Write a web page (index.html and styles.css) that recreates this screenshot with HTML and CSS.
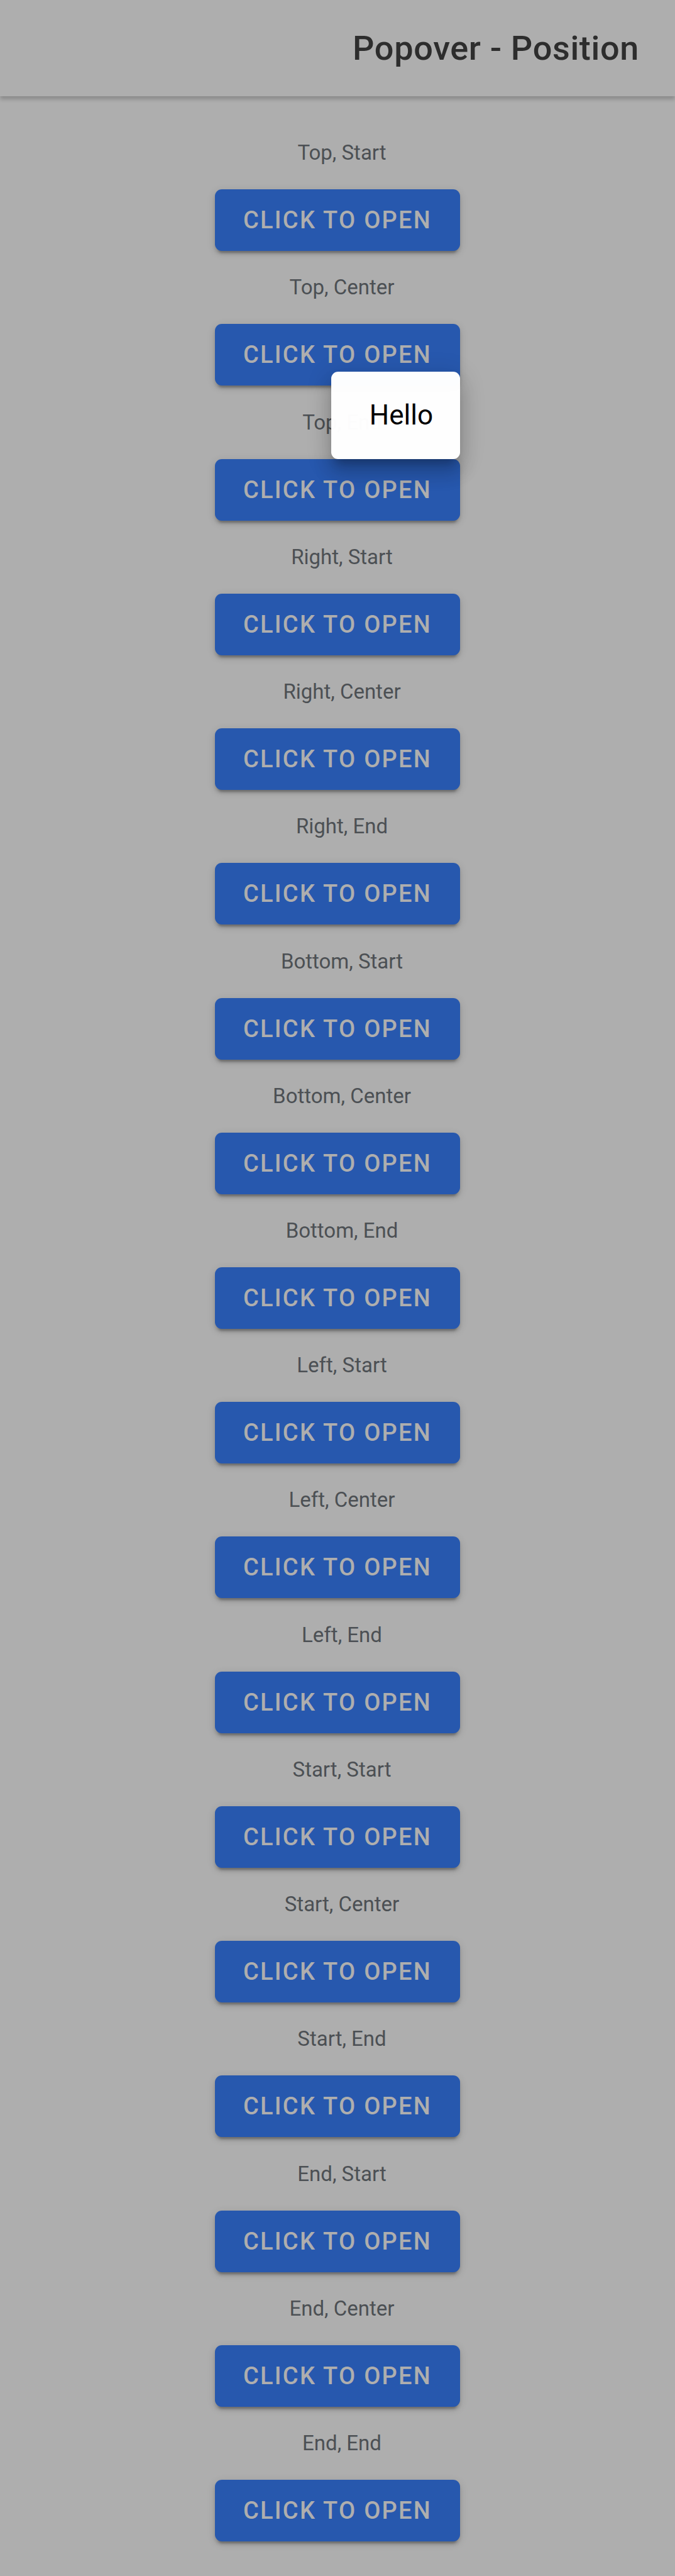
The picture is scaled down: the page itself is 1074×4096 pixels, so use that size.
FILE: index.html
```html
<!DOCTYPE html>
<html lang="en">
<head>
<meta charset="utf-8">
<title>Popover - Position</title>
<link rel="stylesheet" href="styles.css">
</head>
<body>
<header class="toolbar"><h1 class="title">Popover - Position</h1></header>
<main class="content">
<section class="row"><h2 class="label">Top, Start</h2><div class="trigger"><button class="button" type="button">Click to open</button></div></section>
<section class="row"><h2 class="label">Top, Center</h2><div class="trigger"><button class="button" type="button">Click to open</button></div></section>
<section class="row"><h2 class="label">Top, End</h2><div class="trigger"><button class="button" type="button">Click to open</button><div class="popover" role="dialog" aria-label="Popover">Hello</div></div></section>
<section class="row"><h2 class="label">Right, Start</h2><div class="trigger"><button class="button" type="button">Click to open</button></div></section>
<section class="row"><h2 class="label">Right, Center</h2><div class="trigger"><button class="button" type="button">Click to open</button></div></section>
<section class="row"><h2 class="label">Right, End</h2><div class="trigger"><button class="button" type="button">Click to open</button></div></section>
<section class="row"><h2 class="label">Bottom, Start</h2><div class="trigger"><button class="button" type="button">Click to open</button></div></section>
<section class="row"><h2 class="label">Bottom, Center</h2><div class="trigger"><button class="button" type="button">Click to open</button></div></section>
<section class="row"><h2 class="label">Bottom, End</h2><div class="trigger"><button class="button" type="button">Click to open</button></div></section>
<section class="row"><h2 class="label">Left, Start</h2><div class="trigger"><button class="button" type="button">Click to open</button></div></section>
<section class="row"><h2 class="label">Left, Center</h2><div class="trigger"><button class="button" type="button">Click to open</button></div></section>
<section class="row"><h2 class="label">Left, End</h2><div class="trigger"><button class="button" type="button">Click to open</button></div></section>
<section class="row"><h2 class="label">Start, Start</h2><div class="trigger"><button class="button" type="button">Click to open</button></div></section>
<section class="row"><h2 class="label">Start, Center</h2><div class="trigger"><button class="button" type="button">Click to open</button></div></section>
<section class="row"><h2 class="label">Start, End</h2><div class="trigger"><button class="button" type="button">Click to open</button></div></section>
<section class="row"><h2 class="label">End, Start</h2><div class="trigger"><button class="button" type="button">Click to open</button></div></section>
<section class="row"><h2 class="label">End, Center</h2><div class="trigger"><button class="button" type="button">Click to open</button></div></section>
<section class="row"><h2 class="label">End, End</h2><div class="trigger"><button class="button" type="button">Click to open</button></div></section>
</main>
</body>
</html>
```

FILE: styles.css
```css
* {
  box-sizing: border-box;
}

body {
  margin: 0;
  min-height: 100vh;
  display: flex;
  flex-direction: column;
  background: #aeaeae;
  font-family: Roboto, "Liberation Sans", sans-serif;
}

.toolbar {
  display: flex;
  align-items: center;
  justify-content: flex-end;
  min-height: 153px;
  padding: 0 57px;
  background: #aeaeae;
  box-shadow: 0 5px 6px rgba(0, 0, 0, 0.2);
}

.title {
  margin: 0;
  font-size: 54px;
  line-height: 64px;
  font-weight: 500;
  letter-spacing: 0.0125em;
  color: #2d2d2d;
}

.content {
  flex: 1;
  display: flex;
  flex-direction: column;
  padding: 32px 0 55px;
}

.row {
  flex: 1;
  display: flex;
  flex-direction: column;
  align-items: center;
  justify-content: flex-end;
  gap: 39px;
}

.label {
  margin: 0;
  padding-left: 14px;
  font-size: 33px;
  line-height: 38px;
  font-weight: 400;
  color: #4c5054;
}

.trigger {
  position: relative;
}

.button {
  display: block;
  min-width: 390px;
  min-height: 98px;
  padding: 0 42px;
  border: 0;
  border-radius: 11px;
  background: #2758ae;
  color: #aeaeae;
  font: 500 38px/44px Roboto, "Liberation Sans", sans-serif;
  letter-spacing: 0.06em;
  text-transform: uppercase;
  box-shadow: 0 8px 3px -5px rgba(0, 0, 0, 0.2), 0 5px 5px rgba(0, 0, 0, 0.14), 0 3px 14px rgba(0, 0, 0, 0.12);
}

.popover {
  position: absolute;
  right: 0;
  bottom: 100%;
  z-index: 1;
  padding: 44px 43px 44px 61px;
  border-radius: 11px;
  background: #ffffff;
  color: #000000;
  font-size: 44px;
  line-height: 51px;
  opacity: 0.99;
  box-shadow: 0 14px 14px -8px rgba(0, 0, 0, 0.2), 0 22px 28px 3px rgba(0, 0, 0, 0.14), 0 8px 38px 5px rgba(0, 0, 0, 0.12);
}
```
